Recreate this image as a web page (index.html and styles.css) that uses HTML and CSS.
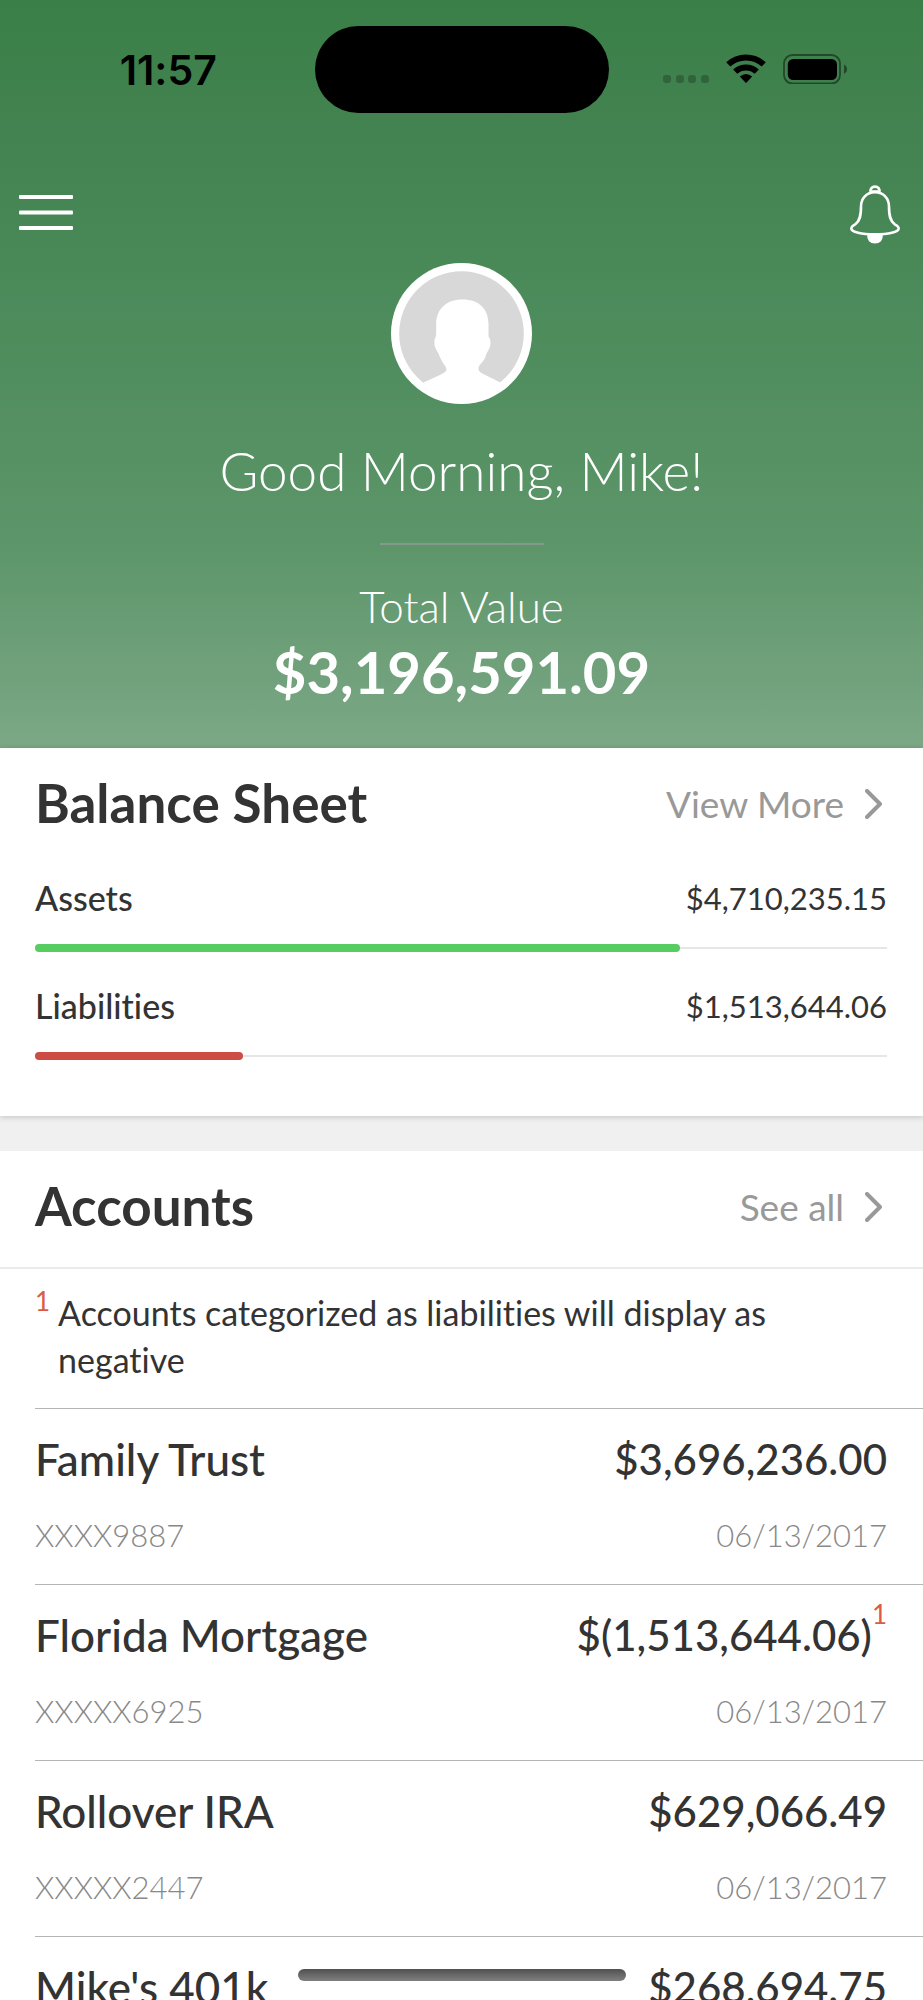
FILE: index.html
```html
<!DOCTYPE html>
<html lang="en">
<head>
<meta charset="utf-8">
<meta name="viewport" content="width=device-width, initial-scale=1">
<title>Dashboard</title>
<link rel="stylesheet" href="styles.css">
</head>
<body>
<div class="screen">
  <header class="hero">
    <div class="status">
      <time class="clock">11:57</time>
      <div class="island"></div>
      <div class="indicators">
        <svg width="46" height="30" viewBox="0 0 46 30" fill="#000" fill-opacity=".23" aria-hidden="true">
          <rect x="0" y="21" width="8" height="8" rx="3"/><rect x="13" y="21" width="8" height="8" rx="3"/><rect x="25" y="21" width="8" height="8" rx="3"/><rect x="38" y="21" width="8" height="8" rx="3"/>
        </svg>
        <svg width="40" height="30" viewBox="0 0 40 30" aria-hidden="true">
          <g fill="none" stroke="#000">
            <path d="M2.300 10.400A26 26 0 0 1 37.700 10.400" stroke-width="6"/>
            <path d="M9.200 17.600A16 16 0 0 1 30.800 17.600" stroke-width="6"/>
          </g>
          <path d="M13.800 22.600Q20 17.600 26.200 22.600L20.600 28.600Q20 29.200 19.400 28.600Z"/>
        </svg>
        <svg width="64" height="30" viewBox="0 0 64 30" aria-hidden="true">
          <rect x="1" y="1" width="56" height="28.500" rx="8.500" fill="none" stroke="#000" stroke-opacity=".45" stroke-width="1.800"/>
          <rect x="4.800" y="5" width="49.200" height="21" rx="5.500"/>
          <path d="M61 10.500Q64 12 64 15.300Q64 18.500 61 20Z" fill-opacity=".45"/>
        </svg>
      </div>
    </div>
    <nav class="nav">
      <button class="icon-button" type="button" aria-label="Menu">
        <svg width="54" height="59" viewBox="0 0 54 59" fill="#fff"><rect y="10" width="54" height="4" rx="1"/><rect y="25.500" width="54" height="4" rx="1"/><rect y="41" width="54" height="4" rx="1"/></svg>
      </button>
      <button class="icon-button" type="button" aria-label="Notifications">
        <svg width="50" height="59" viewBox="0 0 50 59" fill="none" stroke="#fff" stroke-width="2.600">
          <path d="M20.700 7.600C19.800 3.800 22 1.600 25 1.600S30.200 3.800 29.300 7.600"/>
          <path d="M22 6.500H28"/>
          <path d="M25 7.300C16.500 7.300 11 13.200 11 21.500C11 31 9.800 36.200 5.200 39.300C2.800 40.600 1.300 41.600 1.300 43.400C1.300 47 11.500 49.300 25 49.300S48.700 47 48.700 43.400C48.700 41.600 47.200 40.600 44.800 39.300C40.200 36.200 39 31 39 21.500C39 13.200 33.500 7.300 25 7.300Z"/>
          <path d="M18.500 50H31.500C32 54.500 29.300 57.300 25 57.300S18 54.500 18.500 50Z" fill="#fff"/>
        </svg>
      </button>
    </nav>
    <svg class="avatar" width="141" height="141" viewBox="0 0 141 141" role="img" aria-label="Profile photo">
      <circle cx="70.500" cy="70.500" r="70.500" fill="#fff"/>
      <circle cx="70.500" cy="70.500" r="62.300" fill="#d8d8d8"/>
      <path d="M71.500 36.500C89 36.500 97.500 47 97.500 61V73.500C100.500 77 100 84 97 88C95.500 90 95 92 94 95C91.500 100 87 102.500 87.500 106C88 110 92 110.500 109.500 119.500C99 132 86 136 70.500 136S42 132 32.500 119.500L50 111.500C55 109 56.500 107 54.500 103.500C52 100 49 95 47.500 90.500C45 86.500 41.500 81 44.500 74Q45.200 73 45.200 70V61C45.200 47 54.500 36.500 71.500 36.500Z" fill="#fff"/>
    </svg>
    <h1 class="greeting">Good Morning, Mike!</h1>
    <hr class="rule">
    <p class="total-label">Total Value</p>
    <p class="total-value">$3,196,591.09</p>
  </header>

  <main>
    <section class="card balance">
      <div class="card-head">
        <h2 class="title">Balance Sheet</h2>
        <a class="more" href="#balance">View More
          <svg class="chevron" width="17" height="30" viewBox="0 0 17 30" aria-hidden="true"><path d="M2 2L15 15L2 28"/></svg></a>
      </div>
      <div class="meter">
        <div class="meter-text"><span class="meter-name" id="assets">Assets</span><span class="meter-value">$4,710,235.15</span></div>
        <div class="track" role="progressbar" aria-labelledby="assets" aria-valuenow="76"><div class="fill assets" style="width:75.7%"></div></div>
      </div>
      <div class="meter">
        <div class="meter-text"><span class="meter-name" id="liabilities">Liabilities</span><span class="meter-value">$1,513,644.06</span></div>
        <div class="track" role="progressbar" aria-labelledby="liabilities" aria-valuenow="24"><div class="fill liabilities" style="width:24.4%"></div></div>
      </div>
    </section>

    <section class="card accounts">
      <div class="card-head">
        <h2 class="title">Accounts</h2>
        <a class="more" href="#accounts">See all
          <svg class="chevron" width="17" height="30" viewBox="0 0 17 30" aria-hidden="true"><path d="M2 2L15 15L2 28"/></svg></a>
      </div>
      <div class="note"><span class="mark">1</span><p class="note-text">Accounts categorized as liabilities will display as negative</p></div>
      <ul class="list">
        <li class="account"><div class="primary"><span class="name">Family Trust</span><span>$3,696,236.00</span></div><div class="secondary"><span>XXXX9887</span><span>06/13/2017</span></div></li>
        <li class="account"><div class="primary"><span class="name">Florida Mortgage</span><span class="amount">$(1,513,644.06)<span class="mark">1</span></span></div><div class="secondary"><span>XXXXX6925</span><span>06/13/2017</span></div></li>
        <li class="account"><div class="primary"><span class="name">Rollover IRA</span><span>$629,066.49</span></div><div class="secondary"><span>XXXXX2447</span><span>06/13/2017</span></div></li>
        <li class="account"><div class="primary"><span class="name">Mike's 401k</span><span>$268,694.75</span></div></li>
      </ul>
    </section>
  </main>
  <div class="home-indicator"></div>
</div>
</body>
</html>
```
FILE: styles.css
```css
* { box-sizing: border-box; }

body, h1, h2, p, ul { margin: 0; padding: 0; }

body {
  font-family: Lato, "Open Sans", sans-serif;
  font-variant-ligatures: none;
  color: #333;
  background: #fff;
}

.screen {
  position: relative;
  height: 100vh;
  overflow: hidden;
}

.hero {
  display: flex;
  flex-direction: column;
  align-items: center;
  padding: 26px 0 43px;
  color: #fff;
  background: linear-gradient(#3a7f47 0, #438351 18%, #498958 35%, #5c9569 72%, #7ca886 100%);
}

.status {
  display: grid;
  grid-template-columns: 1fr 294px 1fr;
  align-items: center;
  align-self: stretch;
  color: #000;
}

.clock {
  padding-left: 22px;
  font-family: Inter, sans-serif;
  font-size: 41px;
  font-weight: 600;
  line-height: 46px;
  text-align: center;
}

.island {
  height: 87px;
  border-radius: 44px;
  background: #000;
}

.indicators {
  display: flex;
  justify-content: flex-end;
  gap: 17px;
  padding: 0 76px 2px 0;
}

.nav {
  display: flex;
  align-self: stretch;
  justify-content: space-between;
  margin-top: 72px;
  padding: 0 23px 0 19px;
}

.icon-button {
  padding: 0;
  border: 0;
  background: none;
  line-height: 0;
}

.avatar { margin-top: 19px; }

.greeting {
  margin-top: 37px;
  font-size: 53px;
  font-weight: 300;
  line-height: 60px;
}

.rule {
  width: 164px;
  height: 2px;
  margin: 42px 0 36px;
  border: 0;
  background: #85998a;
}

.total-label {
  font-size: 44px;
  font-weight: 300;
  line-height: 50px;
}

.total-value {
  margin-top: 8px;
  font-size: 58px;
  font-weight: 700;
  line-height: 66px;
}

main { background: #f0f0f0; }

.card { background: #fff; }

.balance {
  padding-bottom: 56px;
  box-shadow: 0 1px 6px rgba(0, 0, 0, .2);
}

.accounts { margin-top: 35px; }

.card-head {
  display: flex;
  align-items: center;
  justify-content: space-between;
  padding: 25px 41px 0 35px;
}

.accounts .card-head {
  padding-bottom: 31px;
  border-bottom: 2px solid #ebebeb;
}

.title {
  font-size: 53px;
  font-weight: 700;
  line-height: 60px;
}

.more {
  display: flex;
  align-items: center;
  gap: 21px;
  padding-top: 2px;
  color: #999;
  font-size: 37px;
  font-weight: 400;
  line-height: 46px;
  text-decoration: none;
}

.chevron {
  fill: none;
  stroke: #999;
  stroke-width: 4;
  stroke-linecap: round;
  stroke-linejoin: round;
}

.meter {
  margin-top: 34px;
  padding: 0 36px 0 35px;
}

.card-head + .meter { margin-top: 45px; }

.meter-text {
  display: flex;
  justify-content: space-between;
  margin-bottom: 26px;
  line-height: 40px;
}

.meter-name {
  font-size: 34px;
  font-weight: 500;
}

.meter-value { font-size: 31px; }

.track {
  height: 8px;
  background: linear-gradient(#e6e6e6, #e6e6e6) center / 100% 2px no-repeat;
}

.fill {
  height: 8px;
  border-radius: 4px;
}

.fill.assets { background: #57cd61; }
.fill.liabilities { background: #cc4d45; }

.note {
  display: flex;
  gap: 8px;
  padding: 20px 36px 25px 35px;
}

.note-text {
  font-size: 34px;
  line-height: 47px;
}

.mark {
  color: #dd5a43;
  font-size: 26px;
  font-weight: 400;
  line-height: 24px;
}

.list {
  padding-left: 35px;
  list-style: none;
}

.account {
  padding: 25px 36px 29px 0;
  border-top: 1px solid #b4b4b4;
}

.primary, .secondary {
  display: flex;
  justify-content: space-between;
}

.primary {
  font-size: 42px;
  font-weight: 500;
  line-height: 50px;
}

.name { font-size: 44px; }

.amount { display: flex; }

.amount .mark { margin-top: -8px; }

.secondary {
  margin-top: 31px;
  color: #888;
  font-size: 31px;
  font-weight: 300;
  line-height: 40px;
}

.home-indicator {
  position: absolute;
  bottom: 19px;
  left: 50%;
  width: 328px;
  height: 12px;
  margin-left: -164px;
  border-radius: 6px;
  background: linear-gradient(#505050, #808080);
}
```
